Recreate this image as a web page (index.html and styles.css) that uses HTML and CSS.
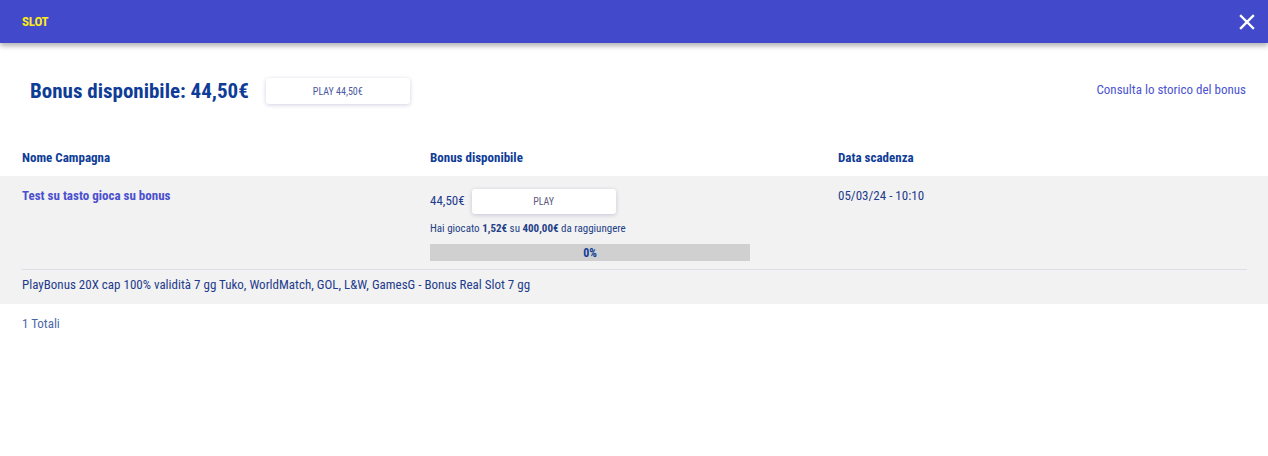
FILE: index.html
```html
<!DOCTYPE html>
<html lang="it">
<head>
<meta charset="utf-8">
<title>Slot</title>
<link rel="stylesheet" href="styles.css">
</head>
<body>
<header class="topbar">
  <span class="title">SLOT</span>
  <button class="close" aria-label="Chiudi">
    <svg width="16" height="16" viewBox="0 0 16 16"><path d="M2 2 L14 14 M14 2 L2 14" stroke="#fff" stroke-width="2.4" stroke-linecap="square"/></svg>
  </button>
</header>
<main class="content">
  <section class="summary">
    <div class="summary-left">
      <h1 class="avail">Bonus disponibile: 44,50€</h1>
      <button class="btn btn-big">PLAY 44,50€</button>
    </div>
    <a class="history" href="#">Consulta lo storico del bonus</a>
  </section>
  <section class="table">
    <div class="thead">
      <div class="th">Nome Campagna</div>
      <div class="th">Bonus disponibile</div>
      <div class="th">Data scadenza</div>
    </div>
    <div class="row">
      <div class="cells">
        <div class="cell name">Test su tasto gioca su bonus</div>
        <div class="cell bonus">
          <div class="amount-line">
            <span class="amount">44,50€</span>
            <button class="btn btn-play">PLAY</button>
          </div>
          <div class="played">Hai giocato <b>1,52€</b> su <b>400,00€</b> da raggiungere</div>
          <div class="progress"><span class="pct">0%</span></div>
        </div>
        <div class="cell date">05/03/24 - 10:10</div>
      </div>
      <div class="desc">PlayBonus 20X cap 100% validità 7 gg Tuko, WorldMatch, GOL, L&amp;W, GamesG - Bonus Real Slot 7 gg</div>
    </div>
    <div class="total">1 Totali</div>
  </section>
</main>
</body>
</html>
```
FILE: styles.css
```css
* { box-sizing: border-box; }
html, body { margin: 0; padding: 0; background: #fff; }
body {
  font-family: "Roboto Condensed", "DejaVu Sans Condensed", Roboto, sans-serif;
  font-stretch: condensed;
  color: #183c8f;
  width: 1268px;
  height: 456px;
  overflow: hidden;
}
.topbar {
  height: 43px;
  background: #4349cb;
  display: flex;
  align-items: center;
  justify-content: space-between;
  padding: 0 13px 0 22px;
  box-shadow: 0 3px 5px rgba(0,0,0,0.3);
  position: relative;
}
.title {
  color: #ffeb14;
  font-weight: 700;
  font-size: 13px;
  letter-spacing: -0.2px;
}
.close {
  background: none;
  border: 0;
  padding: 0;
  width: 16px;
  height: 16px;
  display: flex;
}
.content { padding: 0 21px 0 22px; }
.summary {
  display: flex;
  align-items: center;
  justify-content: space-between;
  height: 94px;
  padding-top: 2px;
}
.summary-left { display: flex; align-items: center; gap: 17px; padding-left: 8px; }
.avail {
  margin: 0;
  font-size: 21px;
  font-weight: 700;
  color: #0e3c96;
}
.btn {
  background: #fff;
  border: 0;
  border-radius: 3px;
  box-shadow: 0 1px 4px rgba(40,50,120,0.22);
  font-family: inherit;
  font-stretch: condensed;
  color: #4a58a0;
  cursor: pointer;
}
.btn-big { width: 144px; height: 26px; font-size: 10px; }
.history {
  color: #4b53cf;
  font-size: 13px;
  text-decoration: none;
  margin-right: 1px;
  margin-top: -4px;
}
.thead, .cells {
  display: grid;
  grid-template-columns: 408px 408px 1fr;
}
.thead { height: 39px; align-items: center; }
.th { font-size: 13px; font-weight: 700; color: #0e3c96; padding-top: 2px; }
.row { background: #f2f2f2; margin: 0 -21px 0 -22px; padding: 0 21px 0 22px; }
.cells { padding: 12px 0 8px; border-bottom: 1px solid #dedee8; }
.cell.name { font-size: 13px; font-weight: 700; color: #4a50cf; }
.cell.date { font-size: 13px; color: #1e3c8c; }
.amount-line { display: flex; align-items: center; gap: 7px; margin-top: 1px; }
.amount { font-size: 13px; color: #1e3c8c; margin-top: -2px; }
.btn-play { width: 144px; height: 25px; font-size: 10px; color: #5a5a80; }
.played { font-size: 11px; color: #233f86; margin-top: 8px; }
.played b { font-weight: 700; }
.progress {
  width: 320px;
  height: 17px;
  background: #d0d0d0;
  margin-top: 9px;
  display: flex;
  align-items: center;
  justify-content: center;
}
.pct { font-size: 12px; font-weight: 700; color: #0e3c96; }
.desc { font-size: 13px; color: #1e3c8c; height: 34px; display: flex; align-items: center; padding-bottom: 5px; }
.total { font-size: 13px; color: #4a67a8; height: 38px; display: flex; align-items: center; }
```
